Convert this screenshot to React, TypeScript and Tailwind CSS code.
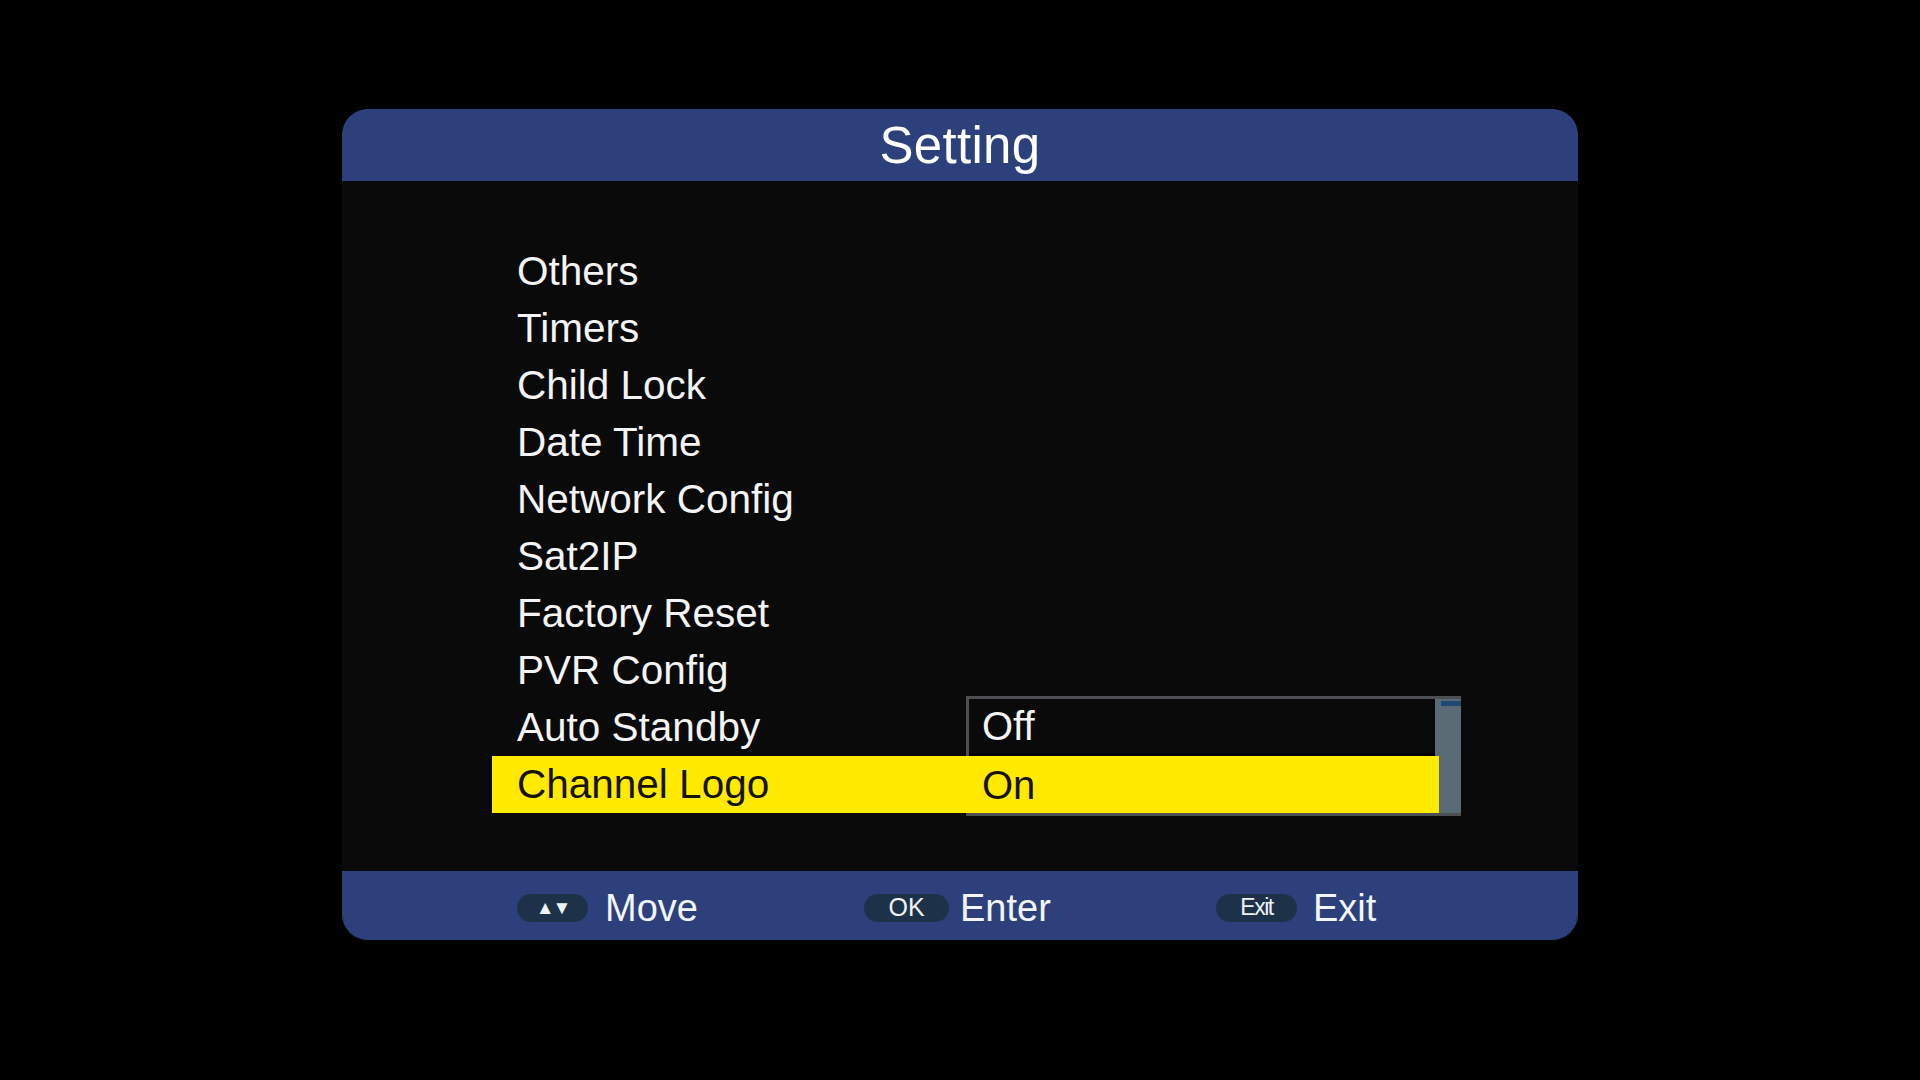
import React from 'react';

const items = [
  'Others',
  'Timers',
  'Child Lock',
  'Date Time',
  'Network Config',
  'Sat2IP',
  'Factory Reset',
  'PVR Config',
  'Auto Standby',
  'Channel Logo',
];

const Pill: React.FC<{ children: React.ReactNode; w: string }> = ({ children, w }) => (
  <div className={`${w} h-[28px] rounded-full bg-[#1d3249] flex items-center justify-center text-[#eef2f6]`}>
    {children}
  </div>
);

const App: React.FC = () => {
  const selected = items.length - 1;

  return (
    <div
      className="w-[1920px] h-[1080px] bg-black pt-[109px] pl-[342px]"
      style={{ fontFamily: '"Liberation Sans", Arial, sans-serif' }}
    >
      <div className="w-[1236px] h-[831px] rounded-[26px] overflow-hidden bg-[#0a0a0a] flex flex-col">
        {/* Titelleiste */}
        <div className="h-[72px] bg-[#2d407b] flex items-center justify-center">
          <h1 className="text-white text-[51px] leading-none tracking-[0.3px]">Setting</h1>
        </div>

        {/* Menü */}
        <div className="flex-1 pt-[62px] pl-[150px]">
          <div className="relative w-[947px]">
            {items.map((label, i) => (
              <div
                key={label}
                className={`h-[57px] flex items-center pl-[25px] text-[40.5px] leading-none ${
                  i === selected ? 'bg-[#ffea00] text-[#161200]' : 'text-[#f4f4f4]'
                }`}
              >
                {label}
              </div>
            ))}

            {/* Auswahlliste */}
            <div className="absolute left-[474px] top-[453px] w-[495px] h-[120px] border-[3px] border-r-0 border-[#4d4f52] flex">
              <div className="flex-1 flex flex-col">
                <div className="h-[57px] bg-[#0a0a0a] border-b-[3px] border-black flex items-center pl-[13px] text-[40px] text-[#f4f4f4] leading-none">
                  Off
                </div>
                <div className="h-[57px] bg-[#ffea00] flex items-center pl-[16px] text-[40px] text-[#161200] leading-none -ml-[3px] -mr-[4px] relative z-10">
                  On
                </div>
              </div>
              <div className="w-[26px] bg-[#5b6b76] flex flex-col pt-[2px] pl-[6px]">
                <div className="h-[5px] bg-[#1f4876]"></div>
              </div>
            </div>
          </div>
        </div>

        {/* Fußleiste */}
        <div className="h-[69px] bg-[#2d407b] flex items-center pl-[175px] pt-[4px] text-[38px] text-[#f2f5fa] leading-none">
          <div className="w-[347px] flex items-center gap-[17px]">
            <Pill w="w-[71px]">
              <span className="text-[19px] leading-none tracking-[-2px]">▲▼</span>
            </Pill>
            <span>Move</span>
          </div>
          <div className="w-[352px] flex items-center gap-[11px]">
            <Pill w="w-[85px]">
              <span className="text-[25px] leading-none">OK</span>
            </Pill>
            <span>Enter</span>
          </div>
          <div className="flex items-center gap-[16px]">
            <Pill w="w-[81px]">
              <span className="text-[23px] leading-none tracking-[-1.5px]">Exit</span>
            </Pill>
            <span>Exit</span>
          </div>
        </div>
      </div>
    </div>
  );
};

export default App;
